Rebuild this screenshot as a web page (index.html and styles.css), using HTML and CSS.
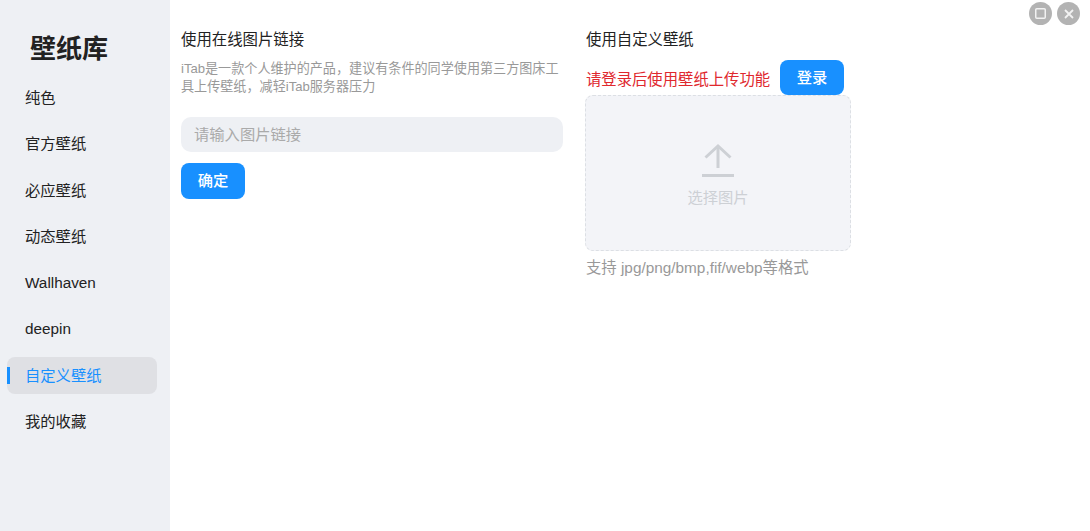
FILE: index.html
```html
<!DOCTYPE html>
<html lang="zh-CN">
<head>
  <meta charset="UTF-8">
  <title>壁纸库</title>
  <link rel="stylesheet" href="styles.css">
</head>
<body>
  <div class="wall">
    <div class="side">
      <div class="side-title">壁纸库</div>
      <div class="side-list">
        <a class="side-item">纯色</a>
        <a class="side-item">官方壁纸</a>
        <a class="side-item">必应壁纸</a>
        <a class="side-item">动态壁纸</a>
        <a class="side-item">Wallhaven</a>
        <a class="side-item">deepin</a>
        <a class="side-item active">自定义壁纸</a>
        <a class="side-item">我的收藏</a>
      </div>
    </div>
    <div class="main">
      <div class="col col-link">
        <div class="col-title">使用在线图片链接</div>
        <p class="tip">iTab是一款个人维护的产品，建议有条件的同学使用第三方图床工具上传壁纸，减轻iTab服务器压力</p>
        <input class="link-input" type="text" placeholder="请输入图片链接">
        <a class="btn">确定</a>
      </div>
      <div class="col col-upload">
        <div class="col-title">使用自定义壁纸</div>
        <div class="login-row">
          <span class="login-tip">请登录后使用壁纸上传功能</span>
          <a class="btn">登录</a>
        </div>
        <div class="upload-box">
          <svg class="upload-icon" width="34" height="34" viewBox="0 0 34 34" fill="none" stroke="#cdd0d5" stroke-width="3">
            <path d="M17 25V3"/>
            <path d="M4.500 14.500 17 3l12.500 11.500"/>
            <path d="M1 32.500h32"/>
          </svg>
          <span class="upload-text">选择图片</span>
        </div>
        <div class="formats">支持 jpg/png/bmp,fif/webp等格式</div>
      </div>
    </div>
    <div class="win-btns">
      <a class="win-btn">
        <svg width="11" height="11" viewBox="0 0 11 11" fill="none" stroke="#f2f2f2" stroke-width="1.500"><rect x="0.750" y="0.750" width="9.500" height="9.500" rx="1"/></svg>
      </a>
      <a class="win-btn">
        <svg width="10" height="10" viewBox="0 0 10 10" fill="none" stroke="#f2f2f2" stroke-width="1.800"><path d="M1 1l8 8M9 1l-8 8"/></svg>
      </a>
    </div>
  </div>
</body>
</html>
```

FILE: styles.css
```css
* {
  box-sizing: border-box;
}
html, body {
  height: 100%;
}
body {
  margin: 0;
  background: #fff;
  font-family: "Liberation Sans", "Noto Sans CJK SC", sans-serif;
  color: #222;
}
.wall {
  position: relative;
  display: flex;
  height: 100%;
}
.side {
  width: 170px;
  flex-shrink: 0;
  background: #eef0f4;
  padding: 0 13px 0 7px;
}
.side-title {
  margin: 32px 0 0 23px;
  font-size: 26px;
  line-height: 34px;
  font-weight: 700;
}
.side-list {
  display: flex;
  flex-direction: column;
  gap: 9.300px;
  margin-top: 13px;
}
.side-item {
  position: relative;
  height: 37px;
  padding-left: 18px;
  border-radius: 8px;
  font-size: 15.300px;
  line-height: 37px;
}
.side-item.active {
  background: #dfe0e4;
  color: #1890ff;
}
.side-item.active::before {
  content: "";
  position: absolute;
  left: 0;
  top: 10px;
  width: 3px;
  height: 17px;
  background: #1890ff;
}
.main {
  display: flex;
  padding: 30px 0 0 11px;
}
.col-link {
  width: 382px;
  margin-right: 23px;
}
.col-upload {
  width: 266px;
}
.col-title {
  font-size: 15.400px;
  line-height: 20px;
}
.tip {
  margin: 10px 0 0;
  font-size: 13.100px;
  line-height: 18px;
  color: #999;
}
.link-input {
  display: block;
  width: 100%;
  height: 35px;
  margin: 21px 0 11px;
  padding: 0 13px;
  border: 0;
  border-radius: 10px;
  outline: 0;
  background: #eef0f4;
  font-family: inherit;
  font-size: 15.300px;
}
.link-input::placeholder {
  color: #aaa;
  opacity: 1;
}
.btn {
  display: block;
  width: 64px;
  height: 36px;
  border-radius: 8px;
  background: #1890ff;
  color: #fff;
  font-size: 15.300px;
  font-weight: 500;
  line-height: 35px;
  text-align: center;
}
.login-row {
  display: flex;
  align-items: center;
  gap: 10px;
  margin-top: 10px;
}
.login-tip {
  font-size: 15.350px;
  color: #e0282e;
}
.login-row .btn {
  height: 35px;
}
.upload-box {
  display: flex;
  flex-direction: column;
  align-items: center;
  width: 266px;
  height: 156px;
  margin-left: -1px;
  padding-top: 47px;
  border: 1px dashed #dcdfe4;
  border-radius: 8px;
  background: #f3f4f8;
}
.upload-icon {
  display: block;
}
.upload-text {
  margin-top: 11px;
  font-size: 15.300px;
  line-height: 20px;
  color: #cdd0d5;
}
.formats {
  margin-top: 7px;
  font-size: 15.350px;
  line-height: 20px;
  color: #999;
}
.win-btns {
  position: absolute;
  top: 2px;
  right: 10px;
  display: flex;
  gap: 5px;
}
.win-btn {
  display: flex;
  align-items: center;
  justify-content: center;
  width: 23px;
  height: 23px;
  border-radius: 50%;
  background: #b3b3b3;
}
```
